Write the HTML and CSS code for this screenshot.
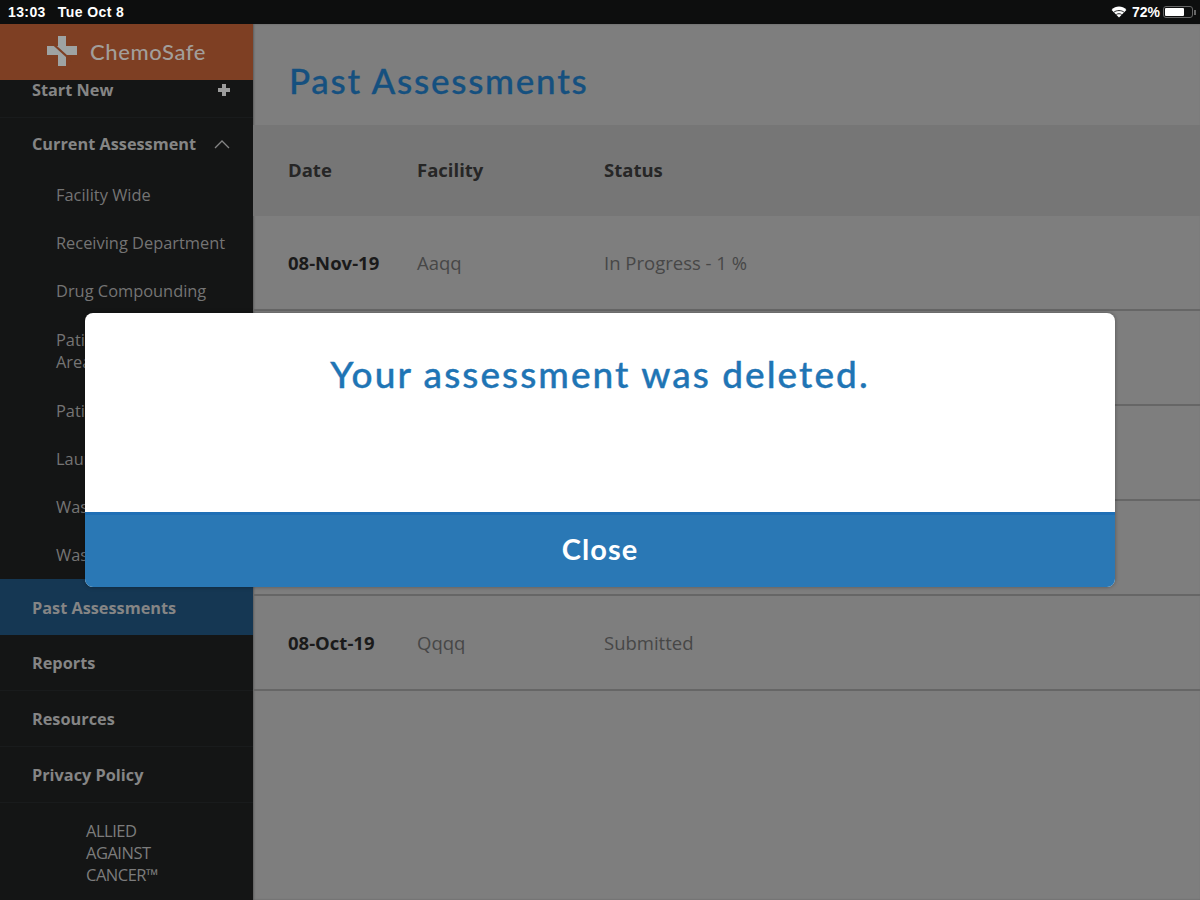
FILE: index.html
```html
<!DOCTYPE html>
<html lang="en">

<head>
    <meta charset="UTF-8">
    <meta name="viewport" content="width=device-width, initial-scale=1.0">
    <title>Past Assessments</title>
    <link rel="stylesheet" href="styles.css">
</head>

<body>
    <div class="status-bar">
        <div class="status-left">
            <span>13:03</span>
            <span>Tue Oct 8</span>
        </div>
        <div class="status-right">
            <svg class="wifi-icon" width="16" height="12" viewBox="0 0 17 13">
                <path d="M8.5 12.5 L0.5 4.2 C5 -0.6 12 -0.6 16.5 4.2 Z" fill="#fff"></path>
                <path d="M3.2 6.6 C6 4.4 11 4.4 13.8 6.6 M5.6 9.2 C7.2 8.1 9.8 8.1 11.4 9.2" stroke="#0d0e0e" stroke-width="1" fill="none"></path>
            </svg>
            <span>72%</span>
            <div class="battery">
                <div class="battery-level"></div>
            </div>
            <div class="battery-tip"></div>
        </div>
    </div>

    <div class="app">
        <aside class="sidebar">
            <div class="brand">
                <svg class="brand-logo" width="34" height="34" viewBox="0 0 34 34">
                    <path d="M13 2 L21 2 L21 12 L32 12 L32 21 L21 21 L21 32 L13 32 L13 21 L2 21 L2 12 L13 12 Z" fill="#9ea3a3"></path>
                    <path d="M7 9 L27 27" stroke="#7e3f23" stroke-width="2.2"></path>
                </svg>
                <span class="brand-name">ChemoSafe</span>
            </div>

            <nav>
                <div class="nav-item nav-start">
                    <span>Start New</span>
                    <span class="nav-plus"></span>
                </div>
                <div class="nav-item nav-current">
                    <span>Current Assessment</span>
                    <svg width="16" height="9" viewBox="0 0 16 9">
                        <path d="M1 8 L8 1 L15 8" stroke="#858585" stroke-width="1.3" fill="none"></path>
                    </svg>
                </div>
                <div class="sub-item">Facility Wide</div>
                <div class="sub-item">Receiving Department</div>
                <div class="sub-item">Drug Compounding</div>
                <div class="sub-item sub-item-tall">Patient Care<br>Areas</div>
                <div class="sub-item">Patient Rooms</div>
                <div class="sub-item">Laundry</div>
                <div class="sub-item">Waste</div>
                <div class="sub-item">Waste</div>
                <div class="nav-item nav-active">Past Assessments</div>
                <div class="nav-item">Reports</div>
                <div class="nav-item">Resources</div>
                <div class="nav-item">Privacy Policy</div>
            </nav>

            <div class="sidebar-footer">ALLIED<br>AGAINST<br>CANCER&trade;</div>
        </aside>

        <main class="content">
            <h1>Past Assessments</h1>

            <div class="table-head">
                <div class="col-date">Date</div>
                <div class="col-facility">Facility</div>
                <div class="col-status">Status</div>
            </div>

            <div class="table-row">
                <div class="col-date">08-Nov-19</div>
                <div class="col-facility">Aaqq</div>
                <div class="col-status">In Progress - 1 %</div>
            </div>
            <div class="table-row"></div>
            <div class="table-row"></div>
            <div class="table-row"></div>
            <div class="table-row">
                <div class="col-date">08-Oct-19</div>
                <div class="col-facility">Qqqq</div>
                <div class="col-status">Submitted</div>
            </div>
        </main>
    </div>

    <div class="modal">
        <div class="modal-body">Your assessment was deleted.</div>
        <button class="modal-btn">Close</button>
    </div>
</body>

</html>
```

FILE: styles.css
```css
html,
body {
    height: 100%;
}

body {
    margin: 0;
    overflow: hidden;
    font-family: "Open Sans", sans-serif;
    background-color: #7e7e7e;
}

.status-bar {
    display: flex;
    justify-content: space-between;
    align-items: center;
    height: 24px;
    padding: 0 4px 0 8px;
    background-color: #0d0e0e;
    color: #fff;
    font-family: "Liberation Sans", Arial, sans-serif;
    font-size: 14px;
    font-weight: bold;
}

.status-left {
    display: flex;
    gap: 12px;
    letter-spacing: 0.4px;
}

.status-right {
    display: flex;
    align-items: center;
}

.wifi-icon {
    margin-right: 5px;
}

.battery {
    width: 30px;
    height: 12px;
    margin-left: 3px;
    padding: 1px;
    border: 1px solid #666;
    border-radius: 3px;
    box-sizing: border-box;
}

.battery-level {
    width: 72%;
    height: 100%;
    border-radius: 1px;
    background-color: #fff;
}

.battery-tip {
    width: 2px;
    height: 5px;
    margin-left: 1px;
    background-color: #666;
}

.app {
    display: flex;
    height: 876px;
}

.sidebar {
    flex: 0 0 253px;
    background-color: #141515;
    color: #858585;
}

.brand {
    display: flex;
    align-items: center;
    height: 56px;
    padding: 0 0 2px 45px;
    box-sizing: border-box;
    background-color: #7e3f23;
}

.brand-name {
    margin-left: 11px;
    font-family: Lato, sans-serif;
    font-size: 22px;
    font-weight: 500;
    letter-spacing: 0.6px;
    color: #a29e9a;
}

.nav-item {
    display: flex;
    justify-content: space-between;
    align-items: center;
    height: 55px;
    padding: 0 23px 0 32px;
    border-bottom: 1px solid #191b1c;
    font-size: 16.3px;
    font-weight: 700;
}

.nav-start {
    height: 20px;
    padding-bottom: 17px;
}

.nav-plus {
    position: relative;
    width: 12px;
    height: 4px;
    background-color: #9c9c9c;
}

.nav-plus::after {
    content: "";
    position: absolute;
    left: 4px;
    top: -4px;
    width: 4px;
    height: 12px;
    background-color: #9c9c9c;
}

.nav-current {
    height: 52px;
    border-bottom: 0;
}

.nav-active {
    height: 56px;
    box-sizing: border-box;
    padding-top: 2px;
    margin-top: 1px;
    background-color: #153753;
    border-bottom: 0;
}

.sub-item {
    display: flex;
    align-items: center;
    height: 48px;
    box-sizing: border-box;
    padding: 2px 0 0 56px;
    font-size: 16.4px;
    line-height: 22px;
    color: #747474;
}

.sub-item-tall {
    height: 72px;
}

.sidebar-footer {
    padding: 17px 0 0 86px;
    font-size: 16.5px;
    line-height: 22px;
    letter-spacing: -0.5px;
    color: #7c7c7c;
}

.content {
    flex: 1;
    box-shadow: inset 1px 0 2px rgba(0, 0, 0, 0.25);
}

h1 {
    height: 101px;
    margin: 0;
    padding-left: 36px;
    box-sizing: border-box;
    font-family: Lato, sans-serif;
    font-size: 35px;
    font-weight: 500;
    line-height: 112px;
    letter-spacing: 1.75px;
    -webkit-text-stroke: 0.3px;
    color: #15507f;
}

.table-head,
.table-row {
    display: flex;
    align-items: center;
    padding-left: 35px;
    font-size: 18.5px;
}

.table-head {
    height: 89px;
    padding-bottom: 2px;
    background-color: #767676;
    font-weight: 700;
    color: #262626;
}

.table-row {
    height: 93px;
    border-bottom: 2px solid #666;
    color: #474747;
}

.col-date {
    width: 129px;
}

.table-row .col-date {
    font-weight: 700;
    color: #1a1a1a;
}

.col-facility {
    width: 187px;
}

.modal {
    position: absolute;
    left: 85px;
    top: 313px;
    display: flex;
    flex-direction: column;
    width: 1030px;
    height: 274px;
    overflow: hidden;
    border-radius: 8px;
    background-color: #fff;
    box-shadow: 0 0 4px rgba(0, 0, 0, 0.35);
}

.modal-body {
    flex: 1;
    padding-top: 37px;
    font-family: Lato, sans-serif;
    font-size: 37px;
    font-weight: 500;
    line-height: 48px;
    letter-spacing: 2.05px;
    -webkit-text-stroke: 0.4px;
    text-align: center;
    color: #1f75b5;
}

.modal-btn {
    height: 75px;
    padding: 0 0 5px;
    border: 0;
    border-top: 3px solid #1f6fb5;
    background-color: #2a78b5;
    color: #fff;
    font-family: Lato, sans-serif;
    font-size: 29px;
    font-weight: 700;
    letter-spacing: 1px;
}
```
